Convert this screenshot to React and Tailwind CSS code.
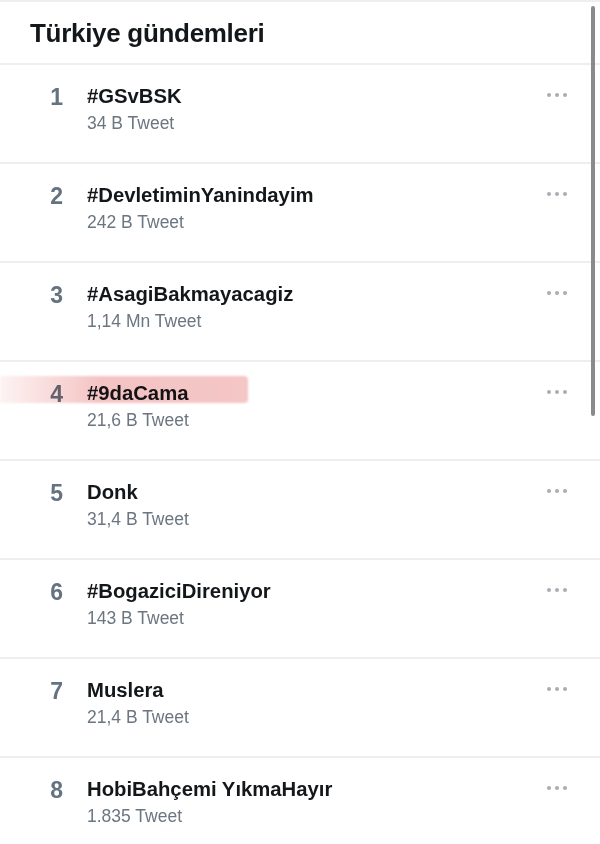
import React from "react";

const trends = [
  { rank: 1, title: "#GSvBSK", count: "34 B Tweet" },
  { rank: 2, title: "#DevletiminYanindayim", count: "242 B Tweet" },
  { rank: 3, title: "#AsagiBakmayacagiz", count: "1,14 Mn Tweet" },
  { rank: 4, title: "#9daCama", count: "21,6 B Tweet", marked: true },
  { rank: 5, title: "Donk", count: "31,4 B Tweet" },
  { rank: 6, title: "#BogaziciDireniyor", count: "143 B Tweet" },
  { rank: 7, title: "Muslera", count: "21,4 B Tweet" },
  { rank: 8, title: "HobiBahçemi YıkmaHayır", count: "1.835 Tweet" },
];

const Dots = () => (
  <div className="flex items-center gap-[4px] pt-[28px]">
    <span className="w-[4px] h-[4px] rounded-full bg-[#a9adb1]" />
    <span className="w-[4px] h-[4px] rounded-full bg-[#a9adb1]" />
    <span className="w-[4px] h-[4px] rounded-full bg-[#a9adb1]" />
  </div>
);

const App = () => {
  return (
    <div
      className="relative w-[600px] h-[844px] overflow-hidden bg-white border-t-2 border-[#eceef0]"
      style={{ fontFamily: '"Liberation Sans", Arial, sans-serif' }}
    >
      <div className="h-[63px] flex items-center pl-[30px] pt-[2px] border-b-2 border-[#eceef0]">
        <h1 className="text-[26px] font-bold text-[#14171a] tracking-[-0.3px]">
          Türkiye gündemleri
        </h1>
      </div>

      {trends.map((t) => (
        <div
          key={t.rank}
          className="relative h-[99px] flex border-b-2 border-[#eceef0]"
        >
          {t.marked && (
            <div className="absolute left-0 top-[14px] w-[248px] h-[27px] mix-blend-multiply bg-gradient-to-r from-[#fdf3f3] via-[#f4c4c4] via-40% to-[#f5c6c6] rounded-r-[4px] blur-[1px]" />
          )}
          <div className="w-[87px] flex justify-end pr-[24px] pt-[21px]">
            <span className="text-[23px] font-bold text-[#657380] leading-none">
              {t.rank}
            </span>
          </div>
          <div className="flex-1 pt-[19px]">
            <div className="text-[20.3px] font-bold text-[#14171a] leading-[24px]">
              {t.title}
            </div>
            <div className="text-[17.5px] text-[#6b7681] leading-[20px] mt-[5px]">
              {t.count}
            </div>
          </div>
          <div className="pr-[33px]">
            <Dots />
          </div>
        </div>
      ))}

      <div className="absolute right-[5px] top-[4px] w-[4px] h-[410px] rounded-full bg-[#8a8a8a]" />
    </div>
  );
};

export default App;
